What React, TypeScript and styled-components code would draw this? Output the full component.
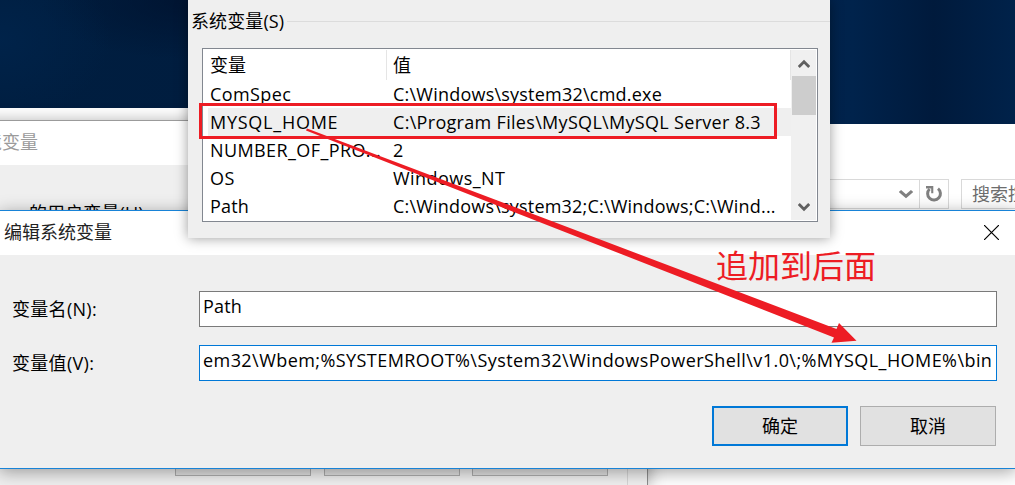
import React from "react";
import styled, { createGlobalStyle } from "styled-components";

const Global = createGlobalStyle`
  *, *::before, *::after { box-sizing: border-box; }
  body {
    margin: 0;
    overflow: hidden;
    font-family: "Open Sans", "Noto Sans CJK SC", sans-serif;
    font-size: 18px;
    color: #000;
  }
`;

const Desktop = styled.main`
  position: relative;
  width: 1015px;
  height: 485px;
  overflow: hidden;
  background:
    radial-gradient(ellipse 110px 80px at 0 40px, rgba(0, 36, 76, 0.8) 0%, rgba(0, 36, 76, 0) 100%),
    radial-gradient(ellipse 150px 60px at 190px 0, rgba(0, 18, 46, 0.8) 0%, rgba(0, 18, 46, 0) 100%),
    linear-gradient(90deg, #001e40 0%, #001c3e 50%, #00234c 84%, #001a3c 92%, #00224a 100%);
`;

const BackWindow = styled.section<{ $x: number; $y: number; $w: number; $h: number }>`
  position: absolute;
  left: ${(p) => p.$x}px;
  top: ${(p) => p.$y}px;
  width: ${(p) => p.$w}px;
  height: ${(p) => p.$h}px;
  overflow: hidden;
  background: #fff;
`;

const ExplorerBar = styled.div`
  display: flex;
  padding-top: 55px;
`;

const AddressBox = styled.div`
  display: flex;
  flex: none;
  width: 301px;
  height: 30px;
  margin-right: 12px;
  border: 1px solid #d9d9d9;
`;

const AddressField = styled.div`
  display: flex;
  flex: 1;
  align-items: center;
  justify-content: flex-end;
  padding-right: 6px;
  border-right: 1px solid #d9d9d9;
`;

const RefreshCell = styled.div`
  display: flex;
  width: 28px;
  align-items: center;
  justify-content: center;
`;

const SearchBox = styled.div`
  flex: none;
  width: 140px;
  height: 30px;
  padding-left: 10px;
  border: 1px solid #d9d9d9;
  color: #6d6d6d;
  line-height: 29px;
  white-space: nowrap;
`;

const VariablesWindow = styled(BackWindow)`
  display: flex;
  flex-direction: column;
  border-top: 1px solid #9b9b9b;
  border-right: 1px solid #8c8c8c;
  background: #efefef;
  box-shadow: 0 2px 16px rgba(0, 0, 0, 0.36);
`;

const VariablesTitle = styled.header`
  height: 44px;
  padding-left: 1px;
  background: #fff;
  color: #9b9b9b;
  line-height: 43px;
`;

const VariablesGroup = styled.div`
  display: flex;
  flex: 1;
  flex-direction: column;
  justify-content: space-between;
  width: 663px;
  border-right: 1px solid #d5d5d5;
`;

const GroupCaption = styled.div`
  padding: 35px 0 0 64px;
  line-height: 26px;
  letter-spacing: 0.1px;
`;

const HiddenButtons = styled.div`
  display: flex;
  gap: 12.5px;
  padding: 0 0 9px 210px;
`;

const HiddenButton = styled.div`
  width: 136px;
  height: 30px;
  border: 1px solid #adadad;
  background: #e1e1e1;
`;

const Dialog = styled.section`
  position: absolute;
  left: -1px;
  top: 210px;
  display: flex;
  flex-direction: column;
  width: 1017px;
  height: 259px;
  border: 1px solid #1883d7;
  background: #efefef;
  box-shadow: 0 3px 16px rgba(0, 0, 0, 0.36);
`;

const DialogTitle = styled.header`
  display: flex;
  justify-content: space-between;
  height: 44px;
  padding: 0 16px 0 4px;
  background: #fff;
  color: #222;
  line-height: 42px;
`;

const CloseIcon = styled.svg`
  margin-top: 14px;
`;

const Form = styled.div`
  display: flex;
  flex-direction: column;
  gap: 18px;
  padding: 36px 18px 0 12px;
`;

const FormRow = styled.label`
  display: flex;
  height: 36px;
  line-height: 36px;
`;

const FormLabel = styled.span`
  width: 187px;
  letter-spacing: 0.3px;
`;

const Field = styled.span<{ $focus?: boolean; $ls: number }>`
  flex: 1;
  height: 36px;
  padding-left: 3px;
  border: 1px solid ${(p) => (p.$focus ? "#0078d7" : "#7a7a7a")};
  background: #fff;
  line-height: 29px;
  letter-spacing: ${(p) => p.$ls}px;
  white-space: nowrap;
`;

const Actions = styled.footer`
  display: flex;
  justify-content: flex-end;
  gap: 12px;
  padding: 25px 19px 0 0;
`;

const Button = styled.button<{ $primary?: boolean }>`
  width: 136px;
  height: 40px;
  padding: 0;
  border: ${(p) => (p.$primary ? "2px solid #0078d7" : "1px solid #adadad")};
  background: #e1e1e1;
  color: #000;
  font: inherit;
  line-height: 34px;
`;

const SystemPanel = styled.section`
  position: absolute;
  left: 188px;
  top: 0;
  width: 642px;
  height: 238px;
  padding-top: 8px;
  background: #efefef;
  box-shadow: 0 0 12px rgba(0, 0, 0, 0.4);
`;

const Legend = styled.div`
  display: flex;
  align-items: center;
  gap: 3px;
  height: 26px;
  padding-left: 3px;
  line-height: 26px;
  letter-spacing: 0.1px;
  white-space: nowrap;

  &::after {
    content: "";
    flex: 1;
    height: 1px;
    background: #dcdcdc;
  }
`;

const ListBox = styled.div`
  display: flex;
  width: 616px;
  height: 174px;
  margin: 14px 0 0 14px;
  padding: 1px;
  border: 1px solid #828790;
  background: #fff;
`;

const Rows = styled.div`
  width: 587px;
`;

const Row = styled.div<{ $head?: boolean; $selected?: boolean }>`
  display: flex;
  height: ${(p) => (p.$head ? 30 : 28)}px;
  margin-left: 4px;
  border-right: 1px solid ${(p) => (p.$head ? "#e5e5e5" : "transparent")};
  background: ${(p) => (p.$selected ? "#efefef" : "transparent")};
  line-height: ${(p) => (p.$head ? 30 : 28)}px;
  white-space: nowrap;
`;

const NameCell = styled.div<{ $head?: boolean; $ls: number }>`
  width: 179px;
  padding-left: 2px;
  border-right: 1px solid ${(p) => (p.$head ? "#e5e5e5" : "transparent")};
  letter-spacing: ${(p) => p.$ls}px;
`;

const ValueCell = styled.div<{ $ls: number }>`
  padding-left: 6px;
  letter-spacing: ${(p) => p.$ls}px;
`;

const ScrollBar = styled.div`
  display: flex;
  flex-direction: column;
  align-items: center;
  width: 25px;
  background: #f0f0f0;
`;

const ScrollArrow = styled.div<{ $up?: boolean }>`
  display: flex;
  align-items: center;
  justify-content: center;
  height: 26px;
  padding-top: ${(p) => (p.$up ? 2 : 0)}px;
`;

const Thumb = styled.div`
  width: 24px;
  height: 39px;
  margin-bottom: auto;
  background: #cdcdcd;
`;

const Highlight = styled.div`
  position: absolute;
  left: 199px;
  top: 103px;
  width: 578px;
  height: 36px;
  border: 3px solid #ed1c24;
`;

const Arrow = styled.svg`
  position: absolute;
  left: 0;
  top: 0;
`;

const Note = styled.div`
  position: absolute;
  left: 716px;
  top: 246px;
  color: #ed1c24;
  font-size: 32px;
  line-height: 40px;
  white-space: nowrap;
`;

const variables = [
  { name: "ComSpec", value: "C:\\Windows\\system32\\cmd.exe", nls: 0.4, vls: 0.22 },
  { name: "MYSQL_HOME", value: "C:\\Program Files\\MySQL\\MySQL Server 8.3", nls: 0.75, vls: 0.31, selected: true },
  { name: "NUMBER_OF_PRO...", value: "2", nls: 0.4, vls: 0 },
  { name: "OS", value: "Windows_NT", nls: 0.5, vls: 0.45 },
  { name: "Path", value: "C:\\Windows\\system32;C:\\Windows;C:\\Wind...", nls: 0.2, vls: 0.2 },
];

function Chevron({ up, color = "#606060", size = 12 }: { up?: boolean; color?: string; size?: number }) {
  return (
    <svg width={size} height="10" viewBox="0 0 12 10" preserveAspectRatio="none">
      <path d={up ? "M0.8 8 L6 2.8 L11.2 8" : "M0.8 2 L6 7.2 L11.2 2"} fill="none" stroke={color} strokeWidth="2.8" />
    </svg>
  );
}

export default function App() {
  return (
    <Desktop>
      <Global />
      <BackWindow $x={0} $y={108} $w={500} $h={377} />
      <BackWindow $x={648} $y={124} $w={367} $h={361}>
        <ExplorerBar>
          <AddressBox>
            <AddressField>
              <Chevron color="#808080" size={14} />
            </AddressField>
            <RefreshCell>
              <svg width="18" height="18" viewBox="0 0 18 18">
                <path d="M13 3.6 A6.4 6.4 0 1 1 4.6 4" fill="none" stroke="#808080" strokeWidth="3" />
                <path d="M1 1 H8.3 V8.2 H6.2 V3.6 H1 Z" fill="#808080" />
              </svg>
            </RefreshCell>
          </AddressBox>
          <SearchBox>搜索控制面板</SearchBox>
        </ExplorerBar>
      </BackWindow>
      <VariablesWindow $x={-35} $y={120} $w={683} $h={365}>
        <VariablesTitle>环境变量</VariablesTitle>
        <VariablesGroup>
          <GroupCaption>的用户变量(U)</GroupCaption>
          <HiddenButtons>
            <HiddenButton />
            <HiddenButton />
            <HiddenButton />
          </HiddenButtons>
        </VariablesGroup>
      </VariablesWindow>
      <Dialog>
        <DialogTitle>
          <span>编辑系统变量</span>
          <CloseIcon width="15" height="15" viewBox="0 0 15 15">
            <path d="M0 0 L15 15 M15 0 L0 15" stroke="#000" strokeWidth="1.2" />
          </CloseIcon>
        </DialogTitle>
        <Form>
          <FormRow>
            <FormLabel>变量名(N):</FormLabel>
            <Field $ls={0.2}>Path</Field>
          </FormRow>
          <FormRow>
            <FormLabel>变量值(V):</FormLabel>
            <Field $focus $ls={0.435}>
              em32\Wbem;%SYSTEMROOT%\System32\WindowsPowerShell\v1.0\;%MYSQL_HOME%\bin
            </Field>
          </FormRow>
        </Form>
        <Actions>
          <Button $primary>确定</Button>
          <Button>取消</Button>
        </Actions>
      </Dialog>
      <SystemPanel>
        <Legend>系统变量(S)</Legend>
        <ListBox>
          <Rows>
            <Row $head>
              <NameCell $head $ls={0}>变量</NameCell>
              <ValueCell $ls={0}>值</ValueCell>
            </Row>
            {variables.map((v) => (
              <Row key={v.name} $selected={v.selected}>
                <NameCell $ls={v.nls}>{v.name}</NameCell>
                <ValueCell $ls={v.vls}>{v.value}</ValueCell>
              </Row>
            ))}
          </Rows>
          <ScrollBar>
            <ScrollArrow $up>
              <Chevron up />
            </ScrollArrow>
            <Thumb />
            <ScrollArrow>
              <Chevron />
            </ScrollArrow>
          </ScrollBar>
        </ListBox>
      </SystemPanel>
      <Highlight />
      <Note>追加到后面</Note>
      <Arrow width="1015" height="485" viewBox="0 0 1015 485">
        <path d="M307 128.5 L836.5 329 L839 323 L856.5 340.7 L831.5 342.8 L834 337.5 L306 130.5 Z" fill="#ed1c24" />
      </Arrow>
    </Desktop>
  );
}
